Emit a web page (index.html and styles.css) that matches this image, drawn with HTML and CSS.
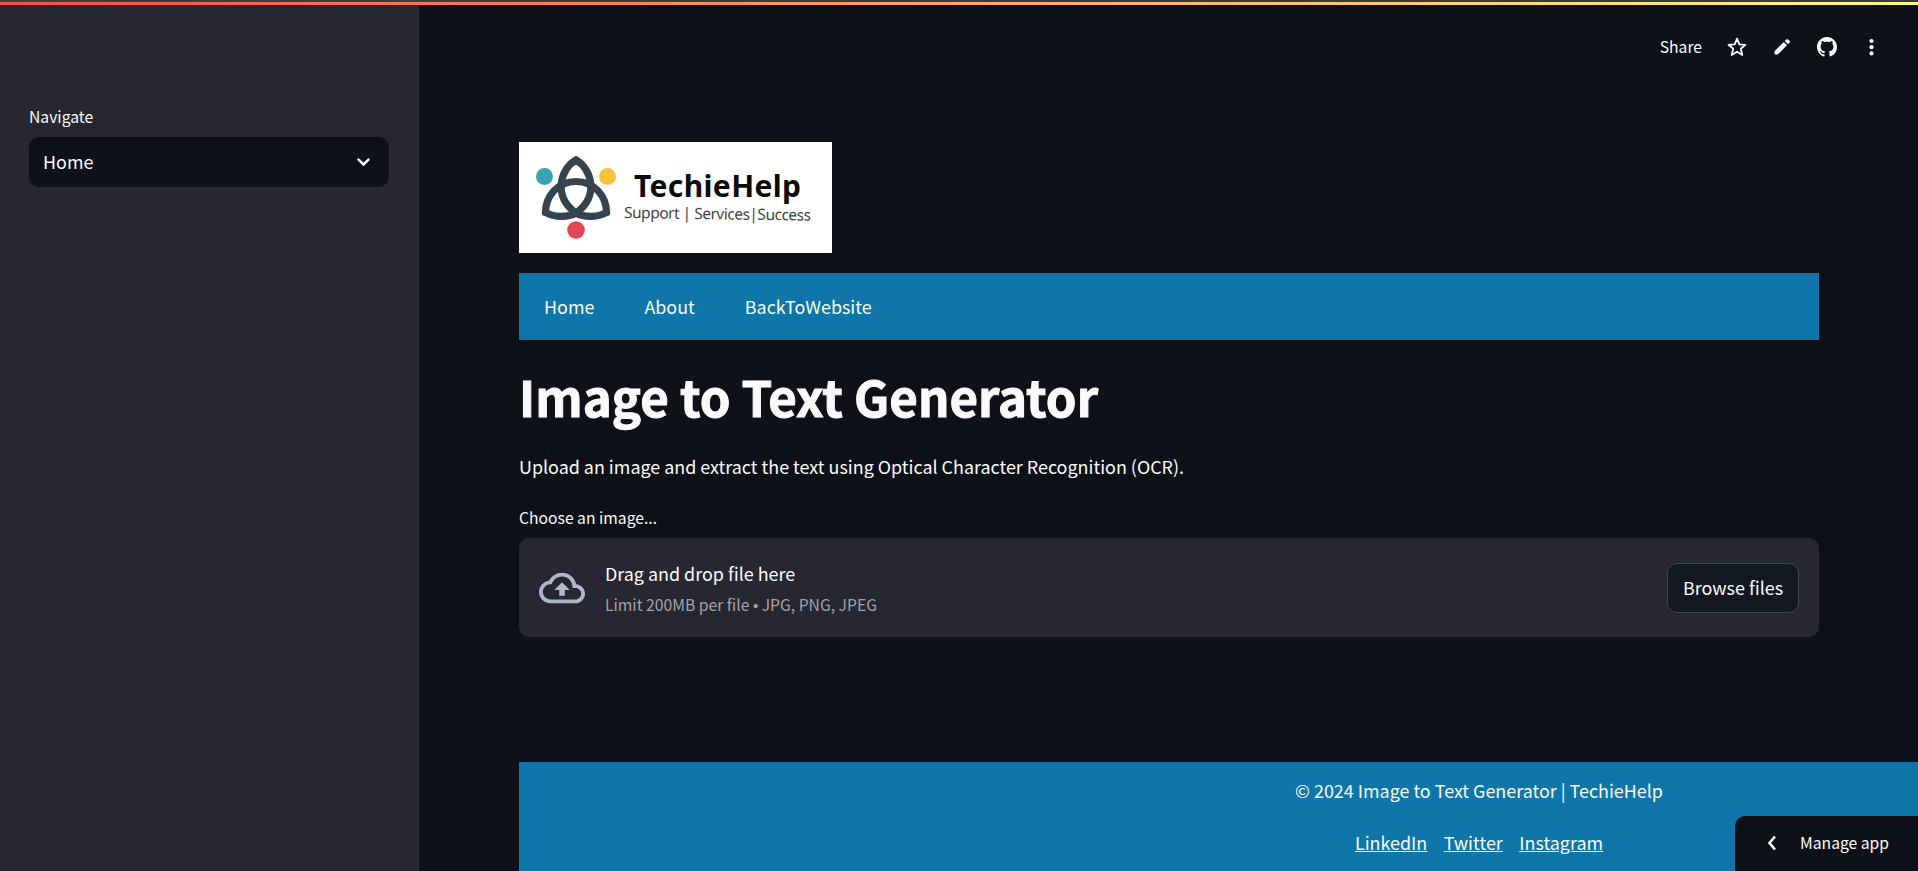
FILE: index.html
```html
<!DOCTYPE html>
<html lang="en">
<head>
<meta charset="utf-8">
<title>Image to Text Generator</title>
<link rel="stylesheet" href="styles.css">
</head>
<body>
<div class="stripe"></div>
<div class="app">
  <aside class="sidebar">
    <label class="label">Navigate</label>
    <div class="select"><span>Home</span>
      <svg width="25" height="25" viewBox="0 0 24 24" fill="none" stroke="#fafafa" stroke-width="2.500" stroke-linecap="round"><path d="M7.200 10.200l4.800 4.700 4.800-4.700"/></svg>
    </div>
  </aside>
  <div class="page">
    <header class="toolbar">
      <span class="share">Share</span>
      <svg width="20" height="20" viewBox="0 0 20 20" fill="none" stroke="#fafafa" stroke-width="1.8" stroke-linejoin="round"><path d="M10 1.6l2.3 5.700 6.200.5-4.700 4 1.500 6.200-5.300-3.300L4.700 18l1.500-6.200-4.700-4 6.200-.5z"/></svg>
      <svg width="20" height="20" viewBox="0 0 20 20" fill="#fafafa"><path d="M2.500 14.300l9.300-9.300 3.200 3.200-9.300 9.300H3.300a.8.8 0 0 1-.8-.8zM12.800 4l1.600-1.600a1.200 1.200 0 0 1 1.700 0l1.500 1.500a1.200 1.200 0 0 1 0 1.700L16 7.200z"/></svg>
      <svg width="20" height="20" viewBox="0 0 16 16" fill="#fafafa"><path d="M8 0C3.580 0 0 3.580 0 8c0 3.540 2.290 6.530 5.470 7.590.4.070.55-.17.55-.38 0-.19-.01-.82-.01-1.490-2.010.37-2.530-.49-2.690-.94-.09-.23-.48-.94-.82-1.130-.28-.15-.68-.52-.01-.53.63-.01 1.080.58 1.230.82.720 1.210 1.870.87 2.330.66.070-.52.280-.87.510-1.070-1.780-.2-3.640-.89-3.640-3.950 0-.87.310-1.590.82-2.150-.08-.2-.36-1.020.08-2.120 0 0 .67-.21 2.200.82.640-.18 1.320-.27 2-.27s1.360.09 2 .27c1.530-1.040 2.200-.82 2.200-.82.440 1.100.160 1.920.080 2.120.510.560.82 1.270.82 2.150 0 3.070-1.870 3.750-3.650 3.950.290.250.540.730.540 1.480 0 1.070-.01 1.930-.01 2.200 0 .21.150.46.550.38A8.010 8.010 0 0 0 16 8c0-4.420-3.580-8-8-8z"/></svg>
      <svg width="20" height="20" viewBox="0 0 20 20" fill="#fafafa"><circle cx="9.500" cy="4" r="2.100"/><circle cx="9.500" cy="10.200" r="2.100"/><circle cx="9.500" cy="16.400" r="2.100"/></svg>
    </header>
    <main class="content">
      <div class="logo">
        <svg width="313" height="111" viewBox="0 0 313 111">
          <rect width="313" height="111" fill="#fff"/>
          <g fill="none" stroke="#35434d" stroke-width="7.200" stroke-linecap="round" stroke-linejoin="round">
            <path d="M26.500 70.500C26.500 55 38 39.500 57 39.500C76 39.500 87.500 55 87.500 70.500"/>
            <path d="M57 18C42 26 33 54 57 71C66 76 80 75 87.500 70.500"/>
            <path d="M57 18C72 26 81 54 57 71C48 76 34 75 26.500 70.500"/>
          </g>
          <circle cx="25.500" cy="34.500" r="8.500" fill="#35a3b5"/>
          <circle cx="88.500" cy="34.500" r="8.500" fill="#fbbf3b"/>
          <circle cx="57" cy="88" r="8.800" fill="#e24658"/>
          <text x="115" y="55" class="logo-name" textLength="167">TechieHelp</text>
          <text x="105" y="76" class="logo-tag" textLength="187" transform="rotate(.8 105 76)">Support | Services|Success</text>
        </svg>
      </div>
      <nav class="nav"><a>Home</a><a>About</a><a>BackToWebsite</a></nav>
      <h1 class="title">Image to Text Generator</h1>
      <p class="intro">Upload an image and extract the text using Optical Character Recognition (OCR).</p>
      <label class="label">Choose an image...</label>
      <section class="uploader">
        <svg width="46" height="46" viewBox="0 0 24 24" fill="#b2b6cc"><path d="M19.350 10.040A7.490 7.490 0 0 0 12 4C9.110 4 6.600 5.640 5.350 8.040A5.994 5.994 0 0 0 0 14c0 3.310 2.690 6 6 6h13c2.760 0 5-2.240 5-5 0-2.640-2.050-4.780-4.650-4.960zM19 18H6c-2.210 0-4-1.790-4-4s1.790-4 4-4h.71C7.370 7.690 9.480 6 12 6c3.040 0 5.500 2.460 5.500 5.500v.5H19c1.660 0 3 1.340 3 3s-1.340 3-3 3zM8 13h2.550v3h2.900v-3H16l-4-4z"/></svg>
        <div class="hint"><span>Drag and drop file here</span><small>Limit 200MB per file <b class="dot">•</b> JPG, PNG, JPEG</small></div>
        <button class="browse">Browse files</button>
      </section>
    </main>
  </div>
</div>
<footer class="footer">
  <div class="footer-inner">
    <p>© 2024 Image to Text Generator | TechieHelp</p>
    <p class="links"><a>LinkedIn</a><a>Twitter</a><a>Instagram</a></p>
  </div>
</footer>
<div class="manage">
  <svg width="10" height="16" viewBox="0 0 10 16" fill="none" stroke="#fafafa" stroke-width="2.600"><path d="M8 1.500L2.500 8 8 14.500"/></svg>
  <span>Manage app</span>
</div>
</body>
</html>
```
FILE: styles.css
```css
* { box-sizing: border-box; }
body {
  margin: 0;
  height: 871px;
  overflow: hidden;
  position: relative;
  background: #0e1117;
  color: #fafafa;
  font: 17.92px/30px "Noto Sans CJK SC", "Noto Sans", sans-serif;
  white-space: nowrap;
}
p, h1 { margin: 0; }
svg { display: block; flex: none; }
.stripe {
  position: absolute;
  inset: 0 0 auto;
  height: 5px;
  border-top: 2px solid #3b3b37;
  background: linear-gradient(90deg, #ff4b4b, #fffd80);
}
.app { display: flex; height: 871px; }
.sidebar {
  width: 419px;
  padding: 104px 30px 0 29px;
  background: #262730;
}
.label { display: block; height: 26px; font-size: 15.7px; line-height: 26px; }
.select {
  display: flex;
  align-items: center;
  justify-content: space-between;
  height: 50px;
  margin-top: 7px;
  padding: 0 13px 2px 14px;
  border-radius: 10px;
  background: #0e1117;
}
.page { flex: 1; }
.toolbar {
  display: flex;
  align-items: center;
  justify-content: flex-end;
  gap: 25px;
  height: 94px;
  padding-right: 36px;
}
.share { font-size: 15.7px; }
.content { width: 1400px; padding: 48px 0 0 100px; }
.logo { height: 111px; }
.logo-name { font: bold 30px "Noto Sans", sans-serif; fill: #0b0b0b; }
.logo-tag { font: 15.5px "Noto Sans", sans-serif; fill: #444; }
.nav {
  display: flex;
  align-items: center;
  gap: 50px;
  height: 67px;
  margin-top: 20px;
  padding: 0 25px 2px;
  background: #0e76a8;
}
.title {
  height: 66px;
  margin-top: 23px;
  font-size: 49.2px;
  line-height: 66px;
  font-weight: 700;
  -webkit-text-stroke: 1px #fafafa;
}
.intro { margin-top: 22px; }
.content .label { margin-top: 24px; }
.uploader {
  display: flex;
  align-items: center;
  height: 99px;
  margin-top: 7px;
  padding: 0 20px;
  border-radius: 10px;
  background: #262730;
}
.hint { display: flex; flex-direction: column; gap: 2px; margin: 2px 0 0 20px; }
.hint small { color: #a3a3a9; font-size: 15.7px; }
.dot { font: 15px/1 "Liberation Sans", sans-serif; }
.browse {
  width: 132px;
  height: 50px;
  margin-left: auto;
  padding: 0 0 2px;
  border: 1px solid #41444c;
  border-radius: 10px;
  background: #131720;
  color: #fafafa;
  font: inherit;
}
.footer {
  position: absolute;
  left: 519px;
  right: 0;
  bottom: 0;
  height: 109px;
  padding-top: 13px;
  background: #0e76a8;
}
.footer-inner {
  display: flex;
  flex-direction: column;
  align-items: center;
  gap: 22px;
  margin-left: 521px;
}
.links { display: flex; gap: 16.5px; }
.links a { text-decoration: underline; }
.manage {
  position: absolute;
  right: 0;
  bottom: 0;
  display: flex;
  align-items: center;
  gap: 23px;
  width: 183px;
  height: 55px;
  padding: 0 0 1px 32px;
  border-radius: 10px 0 0;
  background: #0e1117;
  font-size: 15.7px;
}
```
